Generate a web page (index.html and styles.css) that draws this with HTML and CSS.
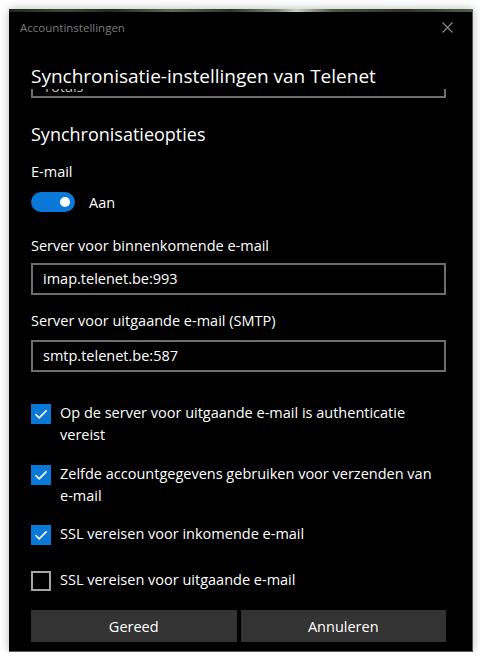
FILE: index.html
```html
<!DOCTYPE html>
<html lang="nl">
<head>
<meta charset="utf-8">
<title>Accountinstellingen</title>
<link rel="stylesheet" href="styles.css">
</head>
<body>
<div class="window">
  <div class="strip"></div>
  <div class="titlebar">
    <span class="title">Accountinstellingen</span>
    <svg class="close" width="11" height="11" viewBox="0 0 11 11"><path d="M0.5 0.5 L10.5 10.5 M10.5 0.5 L0.5 10.5" stroke="#8a8a8a" stroke-width="1.1" fill="none"/></svg>
  </div>
  <div class="content">
    <h1 class="page-title">Synchronisatie-instellingen van Telenet</h1>
    <div class="clip"><div class="field field-clipped">Totals</div></div>
    <h2 class="section">Synchronisatieopties</h2>
    <div class="label email-label">E-mail</div>
    <div class="toggle-row">
      <span class="toggle"><span class="knob"></span></span>
      <span class="toggle-text">Aan</span>
    </div>
    <div class="label label-in">Server voor binnenkomende e-mail</div>
    <div class="field field-in">imap.telenet.be:993</div>
    <div class="label label-out">Server voor uitgaande e-mail (SMTP)</div>
    <div class="field field-out">smtp.telenet.be:587</div>
    <div class="check check-1">
      <span class="box checked"><svg width="20" height="20" viewBox="0 0 20 20"><path d="M4.5 10.2 L8.2 13.9 L15.6 6.4" stroke="#fff" stroke-width="1.6" fill="none"/></svg></span>
      <span class="check-text">Op de server voor uitgaande e-&#8288;mail is authenticatie vereist</span>
    </div>
    <div class="check check-2">
      <span class="box checked"><svg width="20" height="20" viewBox="0 0 20 20"><path d="M4.5 10.2 L8.2 13.9 L15.6 6.4" stroke="#fff" stroke-width="1.6" fill="none"/></svg></span>
      <span class="check-text">Zelfde accountgegevens gebruiken voor verzenden van e-&#8288;mail</span>
    </div>
    <div class="check check-3">
      <span class="box checked"><svg width="20" height="20" viewBox="0 0 20 20"><path d="M4.5 10.2 L8.2 13.9 L15.6 6.4" stroke="#fff" stroke-width="1.6" fill="none"/></svg></span>
      <span class="check-text">SSL vereisen voor inkomende e-mail</span>
    </div>
    <div class="check check-4">
      <span class="box"></span>
      <span class="check-text">SSL vereisen voor uitgaande e-mail</span>
    </div>
    <div class="buttons">
      <button class="btn">Gereed</button>
      <button class="btn">Annuleren</button>
    </div>
  </div>
</div>
</body>
</html>
```

FILE: styles.css
```css
html, body {
  margin: 0;
  padding: 0;
  background: #fff;
}
body {
  font-family: "Open Sans", "Noto Sans", sans-serif;
  color: #fff;
}
.window {
  margin: 9px 0 0 9px;
  width: 464px;
  height: 643px;
  box-sizing: border-box;
  background: #000;
  border-right: 1px solid #5a5a5a;
  border-bottom: 1px solid #5a5a5a;
  box-shadow: 0 0 9px rgba(0, 0, 0, 0.28);
  display: flex;
  flex-direction: column;
  overflow: hidden;
}
.strip {
  height: 3px;
  background: linear-gradient(90deg, #1d2a1c 0%, #3c4a35 12%, #202c1e 22%, #5d6b55 35%, #2b3828 48%, #7d8a77 58%, #c8d0c4 62%, #4a5a44 70%, #2a3527 85%, #51604a 100%);
}
.titlebar {
  height: 30px;
  display: flex;
  align-items: center;
  justify-content: space-between;
  padding: 0 19px 0 11px;
}
.title {
  font-size: 11.5px;
  color: #7c7c7c;
}
.close {
  display: block;
}
.content {
  padding: 0 26px 0 22px;
  display: flex;
  flex-direction: column;
}
.page-title {
  margin: 21px 0 0 0;
  font-size: 19px;
  line-height: 26px;
  font-weight: 400;
}
.clip {
  height: 9px;
  overflow: hidden;
  display: flex;
  flex-direction: column;
  justify-content: flex-end;
}
.field {
  flex: none;
  height: 32px;
  box-sizing: border-box;
  border: 2px solid #6e6e6e;
  padding: 0 10px;
  font-size: 14.5px;
  line-height: 28px;
  color: #fff;
}
.field-clipped {
  line-height: 38px;
  color: #bdbdbd;
}
.section {
  margin: 24px 0 0 0;
  font-size: 18px;
  line-height: 24px;
  font-weight: 400;
}
.label {
  font-size: 14.5px;
  line-height: 20px;
  color: #fff;
}
.email-label { margin-top: 16px; }
.toggle-row {
  margin-top: 10px;
  height: 20px;
  display: flex;
  align-items: center;
  gap: 14px;
  font-size: 14.5px;
  line-height: 20px;
}
.toggle {
  width: 44px;
  height: 20px;
  border-radius: 10px;
  background: #0a78d6;
  display: flex;
  align-items: center;
  justify-content: flex-end;
  padding-right: 5px;
  box-sizing: border-box;
}
.knob {
  width: 10px;
  height: 10px;
  border-radius: 50%;
  background: #fff;
}
.toggle-text { padding-top: 2px; }
.label-in { margin-top: 24px; }
.field-in { margin-top: 7px; }
.label-out { margin-top: 16px; }
.field-out { margin-top: 9px; }
.check {
  display: flex;
  align-items: flex-start;
  gap: 9px;
  font-size: 14.5px;
  line-height: 22px;
}
.check-1 { margin-top: 30px; }
.check-2 { margin-top: 17px; }
.check-3 { margin-top: 16px; }
.check-4 { margin-top: 24px; }
.box {
  flex: none;
  width: 20px;
  height: 20px;
  margin-top: 2px;
  box-sizing: border-box;
  border: 2px solid #a6a6a6;
}
.box.checked {
  border: none;
  background: #0a78d6;
}
.box svg { display: block; }
.check-text { color: #fff; }
.buttons {
  margin-top: 19px;
  display: flex;
  gap: 4px;
}
.btn {
  flex: 1;
  height: 32px;
  border: none;
  background: #333;
  color: #fff;
  font-family: "Open Sans", "Noto Sans", sans-serif;
  font-size: 14.5px;
  padding: 0;
}
```
